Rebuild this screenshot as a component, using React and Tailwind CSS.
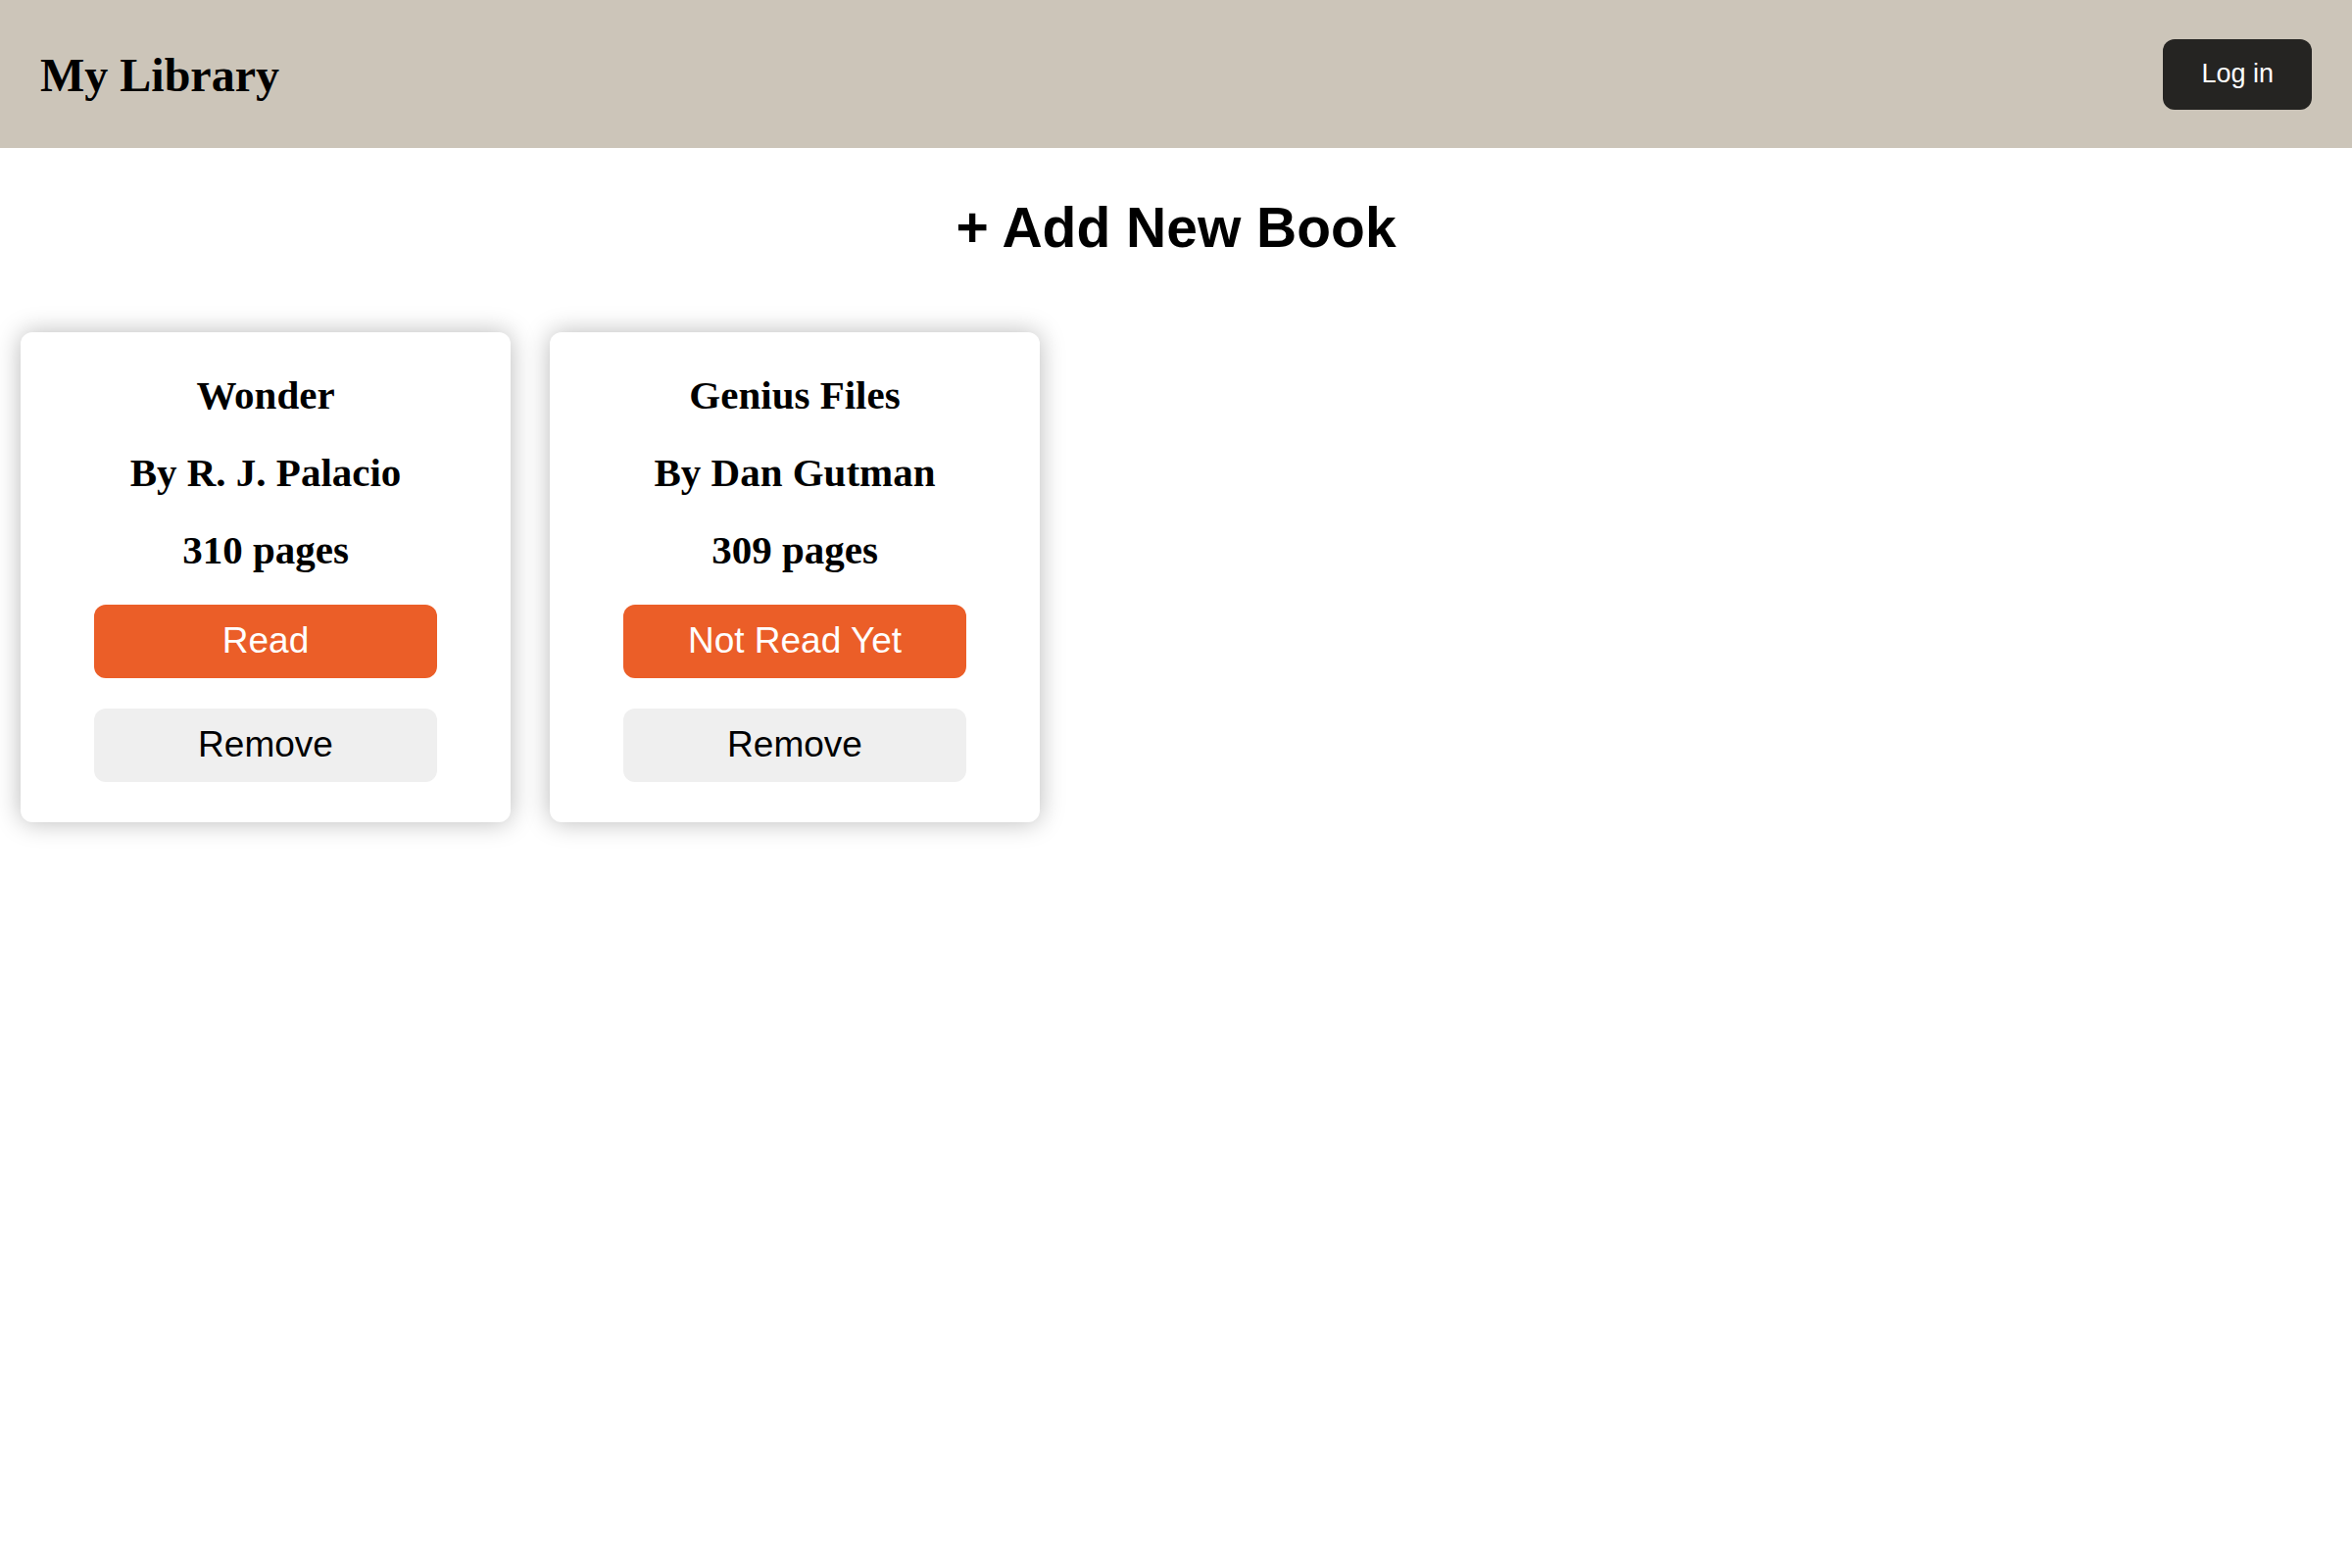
import React, { useState } from 'react';

const initialBooks = [
  { id: 1, title: 'Wonder', author: 'R. J. Palacio', pages: 310, read: true },
  { id: 2, title: 'Genius Files', author: 'Dan Gutman', pages: 309, read: false },
];

const BookCard = ({ book, onToggle, onRemove }) => {
  return (
    <div className="flex h-[500px] w-[500px] flex-col items-center justify-center rounded-xl bg-white shadow-[0_0_26px_rgba(0,0,0,0.28)]">
      <div className="flex flex-col items-center gap-8 font-['Liberation_Serif',serif] text-[41px] font-bold leading-[47px] text-black">
        <p>{book.title}</p>
        <p>By {book.author}</p>
        <p>{book.pages} pages</p>
      </div>
      <div className="mt-8 flex w-[350px] flex-col gap-[31px] font-['Liberation_Sans',Arial,sans-serif] text-[37px]">
        <button
          onClick={() => onToggle(book.id)}
          className="h-[75px] w-full rounded-xl bg-[#eb5e28] text-white"
        >
          {book.read ? 'Read' : 'Not Read Yet'}
        </button>
        <button
          onClick={() => onRemove(book.id)}
          className="h-[75px] w-full rounded-xl bg-[#efefef] text-black"
        >
          Remove
        </button>
      </div>
    </div>
  );
};

export default function App() {
  const [books, setBooks] = useState(initialBooks);

  const toggleRead = (id) => {
    setBooks(books.map(b => (b.id === id ? { ...b, read: !b.read } : b)));
  };

  const removeBook = (id) => {
    setBooks(books.filter(b => b.id !== id));
  };

  return (
    <div className="min-h-screen bg-white">
      {/* Header */}
      <header className="flex h-[151px] items-center justify-between bg-[#ccc5b9] px-[41px]">
        <h1 className="pt-[3px] font-['Liberation_Serif',serif] text-[48px] font-bold text-black">
          My Library
        </h1>
        <button className="h-[72px] rounded-xl bg-[#252422] px-[39px] font-['Liberation_Sans',Arial,sans-serif] text-[27px] text-white">
          Log in
        </button>
      </header>

      <button className="mx-auto mt-[49px] block font-['Liberation_Sans',Arial,sans-serif] text-[57px] font-bold leading-[1.15] text-black">
        + Add New Book
      </button>

      {/* Books */}
      <div className="mt-[73px] flex flex-wrap gap-10 px-[21px]">
        {books.map(book => (
          <BookCard key={book.id} book={book} onToggle={toggleRead} onRemove={removeBook} />
        ))}
      </div>
    </div>
  );
}
